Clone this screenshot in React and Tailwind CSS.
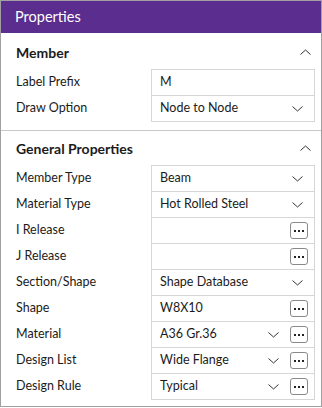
import React from 'react';

const FONT = { fontFamily: 'Lato, "Noto Sans", Arial, sans-serif' };

const ChevronDown = ({ className = '' }) => (
    <svg width="11" height="6" viewBox="0 0 11 6" className={className}>
        <path d="M0.5 0.5 L5.5 5 L10.5 0.5" fill="none" stroke="#333" strokeWidth="1" />
    </svg>
);

const ChevronUp = () => (
    <svg width="11" height="6" viewBox="0 0 11 6">
        <path d="M0.5 5.5 L5.5 1 L10.5 5.5" fill="none" stroke="#333" strokeWidth="1" />
    </svg>
);

const MoreButton = () => (
    <div className="w-[18px] h-[17px] border border-[#8a8a8a] rounded-[3px] flex items-center justify-center gap-[2px] bg-white">
        <span className="w-[2px] h-[2px] bg-[#222]" />
        <span className="w-[2px] h-[2px] bg-[#222]" />
        <span className="w-[2px] h-[2px] bg-[#222]" />
    </div>
);

/**
 * Row - label on the left, a bordered value cell on the right
 * dropdown / more flags decide which controls go at the cell's end
 */
const Row = ({ label, value, dropdown, more, last }) => (
    <div className="flex h-[26px]">
        <div className="w-[150px] pl-[15px] flex items-center text-[12.5px] text-[#1b1b1b]">{label}</div>
        <div
            className={`w-[164px] h-[27px] border border-[#d6d6d6] ${last ? '' : '-mb-px'} flex items-center pl-[8px] pr-[6px] bg-white`}
        >
            <span className="flex-1 text-[12.5px] text-[#1b1b1b]">{value}</span>
            {dropdown && (
                <ChevronDown className={more ? 'mr-[11px]' : 'mr-[5px]'} />
            )}
            {more && <MoreButton />}
        </div>
    </div>
);

const SectionHeader = ({ title, className = '' }) => (
    <div className={`flex items-center justify-between pl-[15px] pr-[10px] ${className}`}>
        <span className="text-[14px] font-bold text-[#1b1b1b]">{title}</span>
        <ChevronUp />
    </div>
);

const generalRows = [
    { label: 'Member Type', value: 'Beam', dropdown: true },
    { label: 'Material Type', value: 'Hot Rolled Steel', dropdown: true },
    { label: 'I Release', value: '', more: true },
    { label: 'J Release', value: '', more: true },
    { label: 'Section/Shape', value: 'Shape Database', dropdown: true },
    { label: 'Shape', value: 'W8X10', more: true },
    { label: 'Material', value: 'A36 Gr.36', dropdown: true, more: true },
    { label: 'Design List', value: 'Wide Flange', dropdown: true, more: true },
    { label: 'Design Rule', value: 'Typical', dropdown: true, more: true },
];

const App = () => {
    return (
        <div className="w-[322px] h-[407px] border border-[#a0a0a0] bg-white flex flex-col" style={FONT}>
            <div className="h-[32px] bg-[#5a2d8e] flex items-center pl-[14px] text-white text-[14.5px]">
                Properties
            </div>

            {/* Member */}
            <SectionHeader title="Member" className="h-[36px] pt-[2px]" />
            <div className="flex flex-col">
                <Row label="Label Prefix" value="M" />
                <Row label="Draw Option" value="Node to Node" dropdown last />
            </div>
            <div className="h-px bg-[#c8c8c8] mt-[9px]" />

            {/* General Properties */}
            <SectionHeader title="General Properties" className="h-[34px]" />
            <div className="flex flex-col">
                {generalRows.map((row, i) => (
                    <Row key={row.label} {...row} last={i === generalRows.length - 1} />
                ))}
            </div>
        </div>
    );
};

export default App;
